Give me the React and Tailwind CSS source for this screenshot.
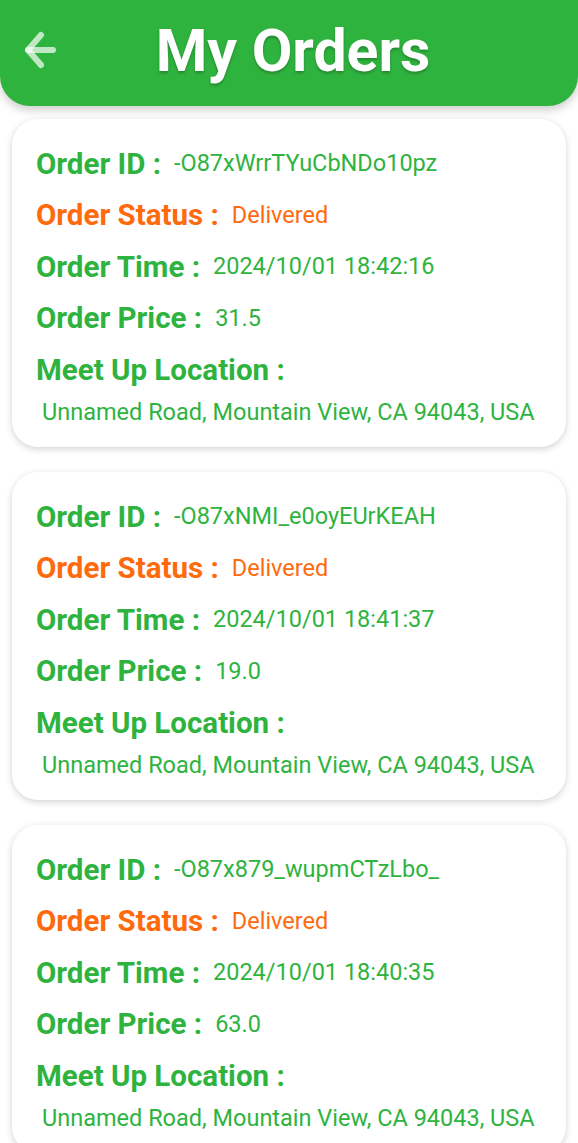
import React from 'react'

const orders = [
  { id: '-O87xWrrTYuCbNDo10pz', status: 'Delivered', time: '2024/10/01 18:42:16', price: '31.5', location: 'Unnamed Road, Mountain View, CA 94043, USA' },
  { id: '-O87xNMI_e0oyEUrKEAH', status: 'Delivered', time: '2024/10/01 18:41:37', price: '19.0', location: 'Unnamed Road, Mountain View, CA 94043, USA' },
  { id: '-O87x879_wupmCTzLbo_', status: 'Delivered', time: '2024/10/01 18:40:35', price: '63.0', location: 'Unnamed Road, Mountain View, CA 94043, USA' },
]

function Row({ label, value, orange }) {
  const color = orange ? 'text-[#ff6a0d]' : 'text-[#2fb33f]'
  return (
    <div className={`flex items-center h-[51.5px] ${color}`}>
      <span className="text-[29.5px] font-bold">{label}</span>
      <span className="ml-[13px] text-[23.5px]">{value}</span>
    </div>
  )
}

function OrderCard({ order }) {
  return (
    <div className="mx-[12px] rounded-[26px] bg-white shadow-[0_2px_7px_rgba(0,0,0,0.18)] pt-[19px] pb-[18.5px] pl-[24px]">
      <Row label="Order ID :" value={order.id} />
      <Row label="Order Status :" value={order.status} orange />
      <Row label="Order Time :" value={order.time} />
      <Row label="Order Price :" value={order.price} />
      <div className="flex items-center h-[51.5px] text-[29.5px] font-bold text-[#2fb33f]">Meet Up Location :</div>
      <div className="pl-[6px] pt-[1px] h-[33px] flex items-center text-[23.5px] text-[#2fb33f]">{order.location}</div>
    </div>
  )
}

export default function App() {
  return (
    <div className="min-h-screen bg-white" style={{ fontFamily: 'Roboto, "Noto Sans", sans-serif' }}>
      <header className="h-[106px] bg-[#2fb33f] rounded-b-[30px] shadow-[0_4px_10px_rgba(0,0,0,0.2)] grid grid-cols-[1fr_auto_1fr] items-center pb-[6px]">
        <div className="pl-[24px] flex items-center">
          <svg width="32" height="40" viewBox="0 0 32 40" fill="none" stroke="rgba(255,255,255,0.7)" strokeWidth="6" strokeLinecap="round" strokeLinejoin="round">
            <path d="M17 5 L4 20 L17 35" />
            <path d="M4 20 H29" />
          </svg>
        </div>
        <h1 className="ml-[8px] text-[59px] font-bold text-white leading-none [text-shadow:0_2px_3px_rgba(0,0,0,0.25)]">My Orders</h1>
        <div />
      </header>
      <div className="pt-[13px] flex flex-col gap-[25px]">
        {orders.map((o) => (
          <OrderCard key={o.id} order={o} />
        ))}
      </div>
    </div>
  )
}
